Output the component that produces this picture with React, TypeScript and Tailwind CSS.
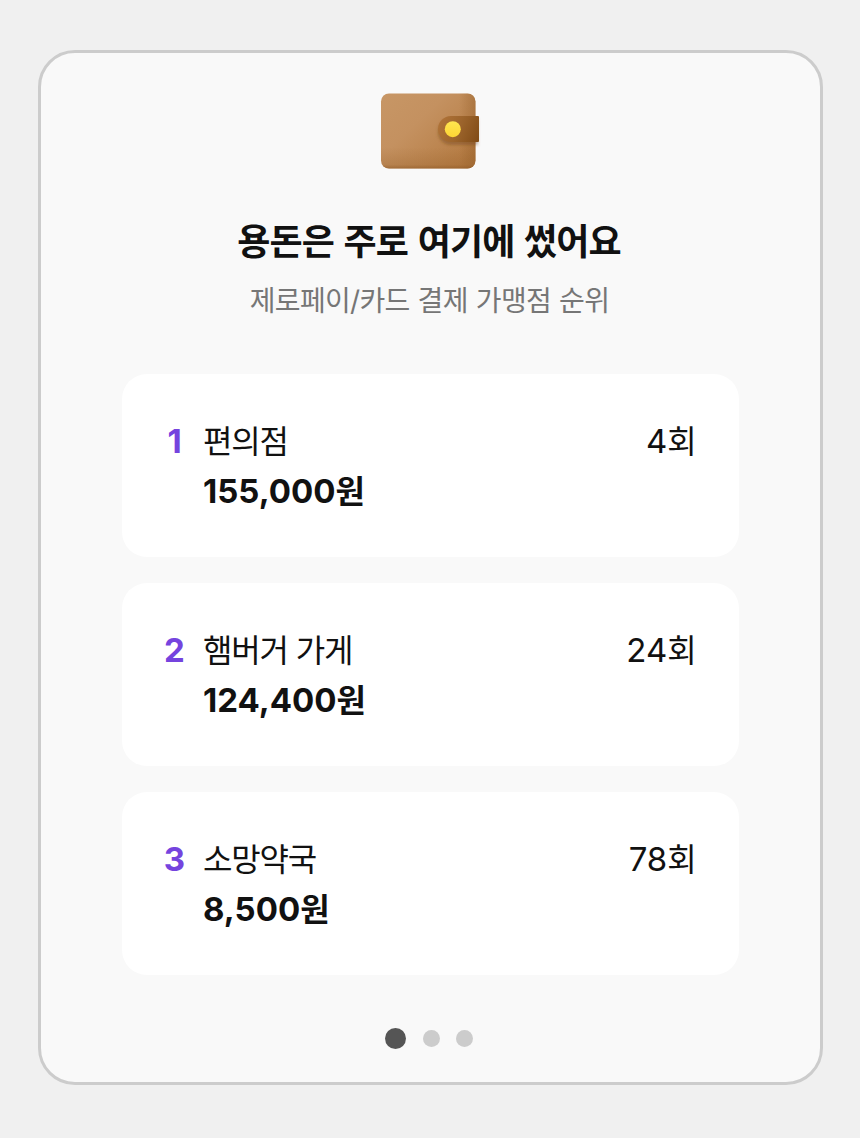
import clsx from 'clsx';

type Store = {
  rank: number;
  name: string;
  amount: string;
  count: number;
};

const stores: Store[] = [
  { rank: 1, name: '편의점', amount: '155,000', count: 4 },
  { rank: 2, name: '햄버거 가게', amount: '124,400', count: 24 },
  { rank: 3, name: '소망약국', amount: '8,500', count: 78 },
];

function WalletIcon() {
  return (
    <svg className="mr-1 h-[90px] w-[108px]" viewBox="0 0 108 90" fill="none">
      <defs>
        <linearGradient id="body" x1="12" y1="8" x2="84" y2="84" gradientUnits="userSpaceOnUse">
          <stop stopColor="#c79665" />
          <stop offset="0.4" stopColor="#c49160" />
          <stop offset="1" stopColor="#b57b42" />
        </linearGradient>
        <linearGradient id="bottom" x1="0" y1="62" x2="0" y2="84" gradientUnits="userSpaceOnUse">
          <stop stopColor="#8f5a25" stopOpacity="0" />
          <stop offset="0.8" stopColor="#8f5a25" stopOpacity="0.22" />
          <stop offset="1" stopColor="#85501d" stopOpacity="0.6" />
        </linearGradient>
        <linearGradient id="side" x1="84" y1="0" x2="101" y2="0" gradientUnits="userSpaceOnUse">
          <stop stopColor="#8f5a25" stopOpacity="0" />
          <stop offset="1" stopColor="#8f5a25" stopOpacity="0.4" />
        </linearGradient>
        <linearGradient id="strap" x1="64" y1="35" x2="104" y2="52" gradientUnits="userSpaceOnUse">
          <stop stopColor="#b07338" />
          <stop offset="0.5" stopColor="#9c642c" />
          <stop offset="1" stopColor="#824d17" />
        </linearGradient>
        <linearGradient id="button" x1="0" y1="36" x2="0" y2="52" gradientUnits="userSpaceOnUse">
          <stop stopColor="#ffe650" />
          <stop offset="1" stopColor="#fdd535" />
        </linearGradient>
        <filter id="shadow" x="54" y="24" width="60" height="50" filterUnits="userSpaceOnUse">
          <feGaussianBlur stdDeviation="1.8" />
        </filter>
      </defs>
      <rect x="6" y="8.5" width="94.5" height="75" rx="8" fill="url(#body)" />
      <rect x="6" y="8.5" width="94.5" height="75" rx="8" fill="url(#side)" />
      <rect x="6" y="8.5" width="94.5" height="75" rx="8" fill="url(#bottom)" />
      <path
        d="M76 34h27v26H76a13 13 0 0 1 0-26Z"
        fill="#6b3f12"
        fillOpacity="0.4"
        filter="url(#shadow)"
      />
      <path
        d="M76 31h27a1 1 0 0 1 1 1v24a1 1 0 0 1-1 1H76a13 13 0 0 1 0-26Z"
        fill="url(#strap)"
      />
      <circle cx="77.8" cy="44.2" r="8" fill="url(#button)" />
    </svg>
  );
}

function StoreCard({ store }: { store: Store }) {
  return (
    <li className="flex h-[183.5px] rounded-[25px] bg-white pt-[42px] pr-[43px] pl-[38px]">
      <span className="w-[30px] text-center text-[33px] leading-[50px] font-bold text-[#7544de]">
        {store.rank}
      </span>
      <div className="ml-[13.5px] flex-1 text-[33px] leading-[50px]">
        <div className="flex h-[50px] items-baseline justify-between">
          <span className="text-[32px] tracking-[-1.15px]">{store.name}</span>
          <span>
            {store.count}
            <span className="text-[32px] leading-none tracking-[-1.2px]">회</span>
          </span>
        </div>
        <p className="font-bold">
          {store.amount}
          <span className="text-[32px] leading-none tracking-[-1.2px]">원</span>
        </p>
      </div>
    </li>
  );
}

function Pagination({ total, current }: { total: number; current: number }) {
  return (
    <div className="mt-[52.5px] mr-[3px] flex items-center gap-[16.5px]">
      {Array.from({ length: total }, (_, i) => (
        <span
          key={i}
          className={clsx(
            'rounded-full',
            i === current ? 'size-[21px] bg-[#555555]' : 'size-[17px] bg-[#cccccc]'
          )}
        />
      ))}
    </div>
  );
}

export default function App() {
  return (
    <div className="h-[1138px] w-[860px] bg-[#f0f0f0] pt-[50px] pl-[38px] font-['Inter','Noto_Sans_CJK_KR',sans-serif] text-[#111111]">
      <main className="flex h-[1035px] w-[785px] flex-col items-center rounded-[37px] border-3 border-[#cccccc] bg-[#f9f9f9] pt-8">
        <WalletIcon />
        <h1 className="mt-[42px] mr-[3px] text-[36px] leading-[50px] font-bold tracking-[-0.9px] [word-spacing:2.1px]">
          용돈은 주로 여기에 썼어요
        </h1>
        <p className="mt-[14px] mr-[2px] text-[28px] leading-[40px] tracking-[-0.7px] text-[#767676] [word-spacing:0.9px]">
          제로페이/카드 결제 가맹점 순위
        </p>
        <ul className="mt-[52.5px] mr-px flex w-[617px] flex-col gap-[25.5px]">
          {stores.map((store) => (
            <StoreCard key={store.rank} store={store} />
          ))}
        </ul>
        <Pagination total={3} current={0} />
      </main>
    </div>
  );
}
